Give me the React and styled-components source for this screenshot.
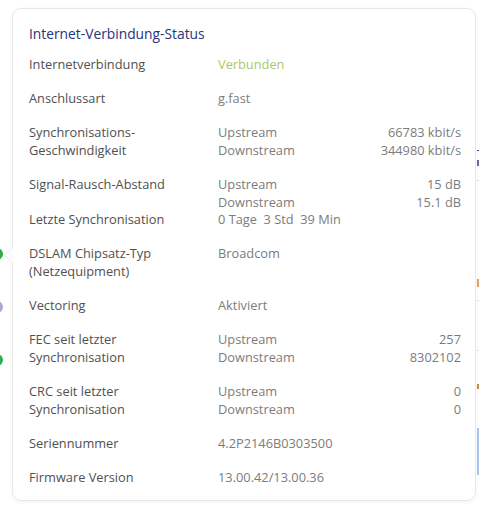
import React from "react";
import styled, { createGlobalStyle } from "styled-components";

const Global = createGlobalStyle`
  html, body { margin: 0; padding: 0; background: #ffffff; }
  body { font-family: "Open Sans", "Noto Sans", sans-serif; }
`;

const Page = styled.div`
  position: relative;
  width: 479px;
  height: 511px;
  overflow: hidden;
  background: #fff;
`;

const LeftStrip = styled.div`
  position: absolute;
  left: -9px;
  top: 248px;
  display: flex;
  flex-direction: column;
  gap: 41px;
`;

const Dot = styled.div`
  width: 12px;
  height: 12px;
  border-radius: 50%;
  background: ${(p) => p.$c};
`;

const RightStrip = styled.div`
  position: absolute;
  left: 477px;
  top: 140px;
  width: 10px;
  display: flex;
  flex-direction: column;
`;

const Mark = styled.div`
  height: ${(p) => p.$h}px;
  width: ${(p) => p.$w || 10}px;
  margin-top: ${(p) => p.$m || 0}px;
  background: ${(p) => p.$c};
`;

const Popover = styled.div`
  position: absolute;
  left: 12px;
  top: 8px;
  width: 464px;
  box-sizing: border-box;
  background: #fff;
  border: 1px solid #e8e8e8;
  border-radius: 9px;
  box-shadow: 0 1px 4px rgba(0, 0, 0, 0.05);
  padding: 16px 14px 14px 16px;

  &::before {
    content: "";
    position: absolute;
    left: -9px;
    top: 237px;
    border-style: solid;
    border-width: 9px 9px 9px 0;
    border-color: transparent #ececec transparent transparent;
  }
  &::after {
    content: "";
    position: absolute;
    left: -8px;
    top: 237px;
    border-style: solid;
    border-width: 9px 9px 9px 0;
    border-color: transparent #fcfcfc transparent transparent;
  }
`;

const Title = styled.h3`
  margin: 0 0 12px 0;
  font-weight: 400;
  font-size: 13.8px;
  line-height: 18px;
  color: #28327a;
`;

const Rows = styled.div`
  display: flex;
  flex-direction: column;
`;

const Row = styled.div`
  display: grid;
  grid-template-columns: 189px 1fr;
  font-size: 12.8px;
  line-height: 18px;
  margin-bottom: ${(p) => (p.$tight ? -1 : 16)}px;
  &:last-child { margin-bottom: 0; }
`;

const Label = styled.div`
  color: #505050;
`;

const Value = styled.div`
  color: ${(p) => (p.$ok ? "#a9c86a" : "#7c7c7c")};
  white-space: pre;
`;

const SubGrid = styled.div`
  display: grid;
  grid-template-columns: 1fr auto;
  color: #7c7c7c;
`;

const Num = styled.span`
  text-align: right;
`;

function Split({ up, down }) {
  return (
    <SubGrid>
      <span>Upstream</span>
      <Num>{up}</Num>
      <span>Downstream</span>
      <Num>{down}</Num>
    </SubGrid>
  );
}

export default function App() {
  return (
    <Page>
      <Global />
      <LeftStrip>
        <Dot $c="#2fae4e" />
        <Dot $c="#a9a8d0" />
        <Dot $c="#2fae4e" />
      </LeftStrip>
      <RightStrip>
        <Mark $h={1} $c="#3a4a9a" $m={10} />
        <Mark $h={6} $w={2} $c="#6a6f9a" $m={9} />
        <Mark $h={1} $c="#dddddd" $m={14} />
        <Mark $h={8} $w={2} $c="#e2a46a" $m={98} />
        <Mark $h={1} $c="#e0e0e0" $m={13} />
        <Mark $h={1} $c="#e0e0e0" $m={49} />
        <Mark $h={5} $w={2} $c="#c9883f" $m={33} />
        <Mark $h={47} $c="#a9c8ef" $m={39} />
      </RightStrip>
      <Popover>
        <Title>Internet-Verbindung-Status</Title>
        <Rows>
          <Row>
            <Label>Internetverbindung</Label>
            <Value $ok>Verbunden</Value>
          </Row>
          <Row>
            <Label>Anschlussart</Label>
            <Value>g.fast</Value>
          </Row>
          <Row>
            <Label>
              Synchronisations-
              <br />
              Geschwindigkeit
            </Label>
            <Split up="66783 kbit/s" down="344980 kbit/s" />
          </Row>
          <Row $tight>
            <Label>Signal-Rausch-Abstand</Label>
            <Split up="15 dB" down="15.1 dB" />
          </Row>
          <Row>
            <Label>Letzte Synchronisation</Label>
            <Value>{"0 Tage  3 Std  39 Min"}</Value>
          </Row>
          <Row>
            <Label>
              DSLAM Chipsatz-Typ
              <br />
              (Netzequipment)
            </Label>
            <Value>Broadcom</Value>
          </Row>
          <Row>
            <Label>Vectoring</Label>
            <Value>Aktiviert</Value>
          </Row>
          <Row>
            <Label>
              FEC seit letzter
              <br />
              Synchronisation
            </Label>
            <Split up="257" down="8302102" />
          </Row>
          <Row>
            <Label>
              CRC seit letzter
              <br />
              Synchronisation
            </Label>
            <Split up="0" down="0" />
          </Row>
          <Row>
            <Label>Seriennummer</Label>
            <Value>4.2P2146B0303500</Value>
          </Row>
          <Row>
            <Label>Firmware Version</Label>
            <Value>13.00.42/13.00.36</Value>
          </Row>
        </Rows>
      </Popover>
    </Page>
  );
}
